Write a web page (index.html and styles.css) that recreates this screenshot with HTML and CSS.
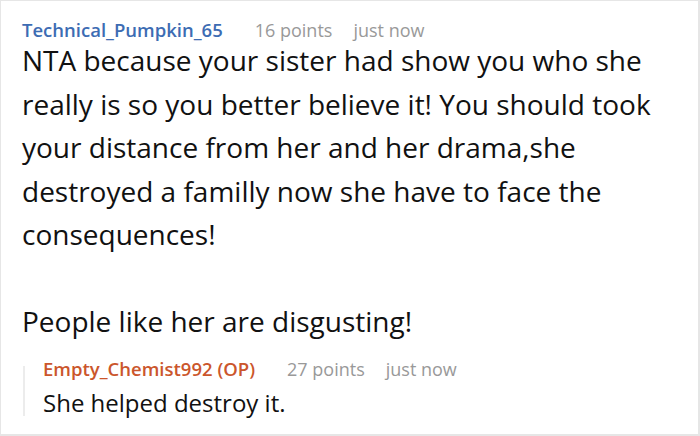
FILE: index.html
```html
<!DOCTYPE html>
<html>
<head>
<meta charset="utf-8">
<link rel="stylesheet" href="styles.css">
</head>
<body>
<div class="thread">
  <div class="comment">
    <div class="meta">
      <span class="author">Technical_Pumpkin_65</span>
      <span class="info">16 points</span>
      <span class="info">just now</span>
    </div>
    <div class="text">
      <p>NTA because your sister had show you who she really is so you better believe it! You should took your distance from her and her drama,she destroyed a familly now she have to face the consequences!</p>
      <p>People like her are disgusting!</p>
    </div>
    <div class="reply">
      <div class="meta">
        <span class="author op">Empty_Chemist992 (OP)</span>
        <span class="info">27 points</span>
        <span class="info">just now</span>
      </div>
      <div class="reply-text">She helped destroy it.</div>
    </div>
  </div>
</div>
</body>
</html>
```
FILE: styles.css
```css
html, body {
  margin: 0;
  padding: 0;
  background: #fff;
}
.thread {
  width: 700px;
  height: 436px;
  box-sizing: border-box;
  border: 1px solid #e6e6e6;
  border-right-width: 2px;
  border-bottom-width: 2px;
  overflow: hidden;
  font-family: "Open Sans", "Noto Sans", sans-serif;
}
.comment {
  padding: 17px 0 0 21px;
}
.meta {
  display: flex;
  align-items: baseline;
  font-size: 18px;
  line-height: 24px;
}
.author {
  font-size: 18.5px;
  font-weight: 600;
  color: #3d6cb3;
  margin-right: 32px;
}
.author.op {
  color: #cb562c;
}
.info {
  color: #999;
  margin-right: 21px;
}
.text {
  font-size: 28px;
  line-height: 43.5px;
  color: #111;
  margin-top: -3px;
  width: 662px;
}
.text p {
  margin: 0 0 43.5px 0;
}
.text p:last-child {
  margin-bottom: 0;
}
.reply {
  margin-top: 13px;
  margin-left: 1px;
  padding-left: 20px;
  background: linear-gradient(#ececec, #ececec) no-repeat 0 9px / 2px calc(100% - 14px);
}
.reply-text {
  font-size: 24px;
  line-height: 36px;
  margin-top: 4px;
  color: #111;
}
```
